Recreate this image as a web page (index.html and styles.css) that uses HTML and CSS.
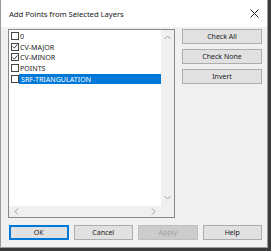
FILE: index.html
```html
<!DOCTYPE html>
<html>
<head>
<meta charset="utf-8">
<link rel="stylesheet" href="styles.css">
</head>
<body>
<div class="window">
  <div class="titlebar">
    <span class="title">Add Points from Selected Layers</span>
    <svg class="close" width="9" height="9" viewBox="0 0 9 9"><path d="M0.5 0.5 L8.5 8.5 M8.5 0.5 L0.5 8.5" stroke="#222" stroke-width="1" fill="none"/></svg>
  </div>
  <div class="body">
    <div class="main">
      <div class="listbox">
        <div class="listarea">
          <div class="items">
            <div class="row"><span class="cb"></span><span class="lbl">0</span></div>
            <div class="row"><span class="cb checked"><svg width="7" height="7" viewBox="0 0 7 7"><path d="M0.8 3.4 L2.7 5.4 L6.3 1" stroke="#222" stroke-width="1" fill="none"/></svg></span><span class="lbl">CV-MAJOR</span></div>
            <div class="row"><span class="cb checked"><svg width="7" height="7" viewBox="0 0 7 7"><path d="M0.8 3.4 L2.7 5.4 L6.3 1" stroke="#222" stroke-width="1" fill="none"/></svg></span><span class="lbl">CV-MINOR</span></div>
            <div class="row"><span class="cb"></span><span class="lbl">POINTS</span></div>
            <div class="row"><span class="cb"></span><span class="lbl sel">SRF-TRIANGULATION</span></div>
          </div>
          <div class="vscroll">
            <svg width="7" height="5" viewBox="0 0 7 5"><path d="M0.5 4 L3.5 1 L6.5 4" stroke="#a0a0a0" fill="none"/></svg>
            <svg width="7" height="5" viewBox="0 0 7 5"><path d="M0.5 1 L3.5 4 L6.5 1" stroke="#a0a0a0" fill="none"/></svg>
          </div>
        </div>
        <div class="hrow">
          <div class="hscroll">
            <svg width="5" height="7" viewBox="0 0 5 7"><path d="M4 0.5 L1 3.5 L4 6.5" stroke="#a0a0a0" fill="none"/></svg>
            <svg width="5" height="7" viewBox="0 0 5 7"><path d="M1 0.5 L4 3.5 L1 6.5" stroke="#a0a0a0" fill="none"/></svg>
          </div>
          <div class="corner"></div>
        </div>
      </div>
      <div class="side">
        <button class="btn">Check All</button>
        <button class="btn">Check None</button>
        <button class="btn">Invert</button>
      </div>
    </div>
    <div class="footer">
      <button class="btn ok">OK</button>
      <button class="btn">Cancel</button>
      <button class="btn disabled">Apply</button>
      <button class="btn">Help</button>
    </div>
  </div>
</div>
</body>
</html>
```
FILE: styles.css
```css
* { box-sizing: border-box; }
html, body { margin: 0; padding: 0; }
body {
  width: 271px;
  height: 251px;
  background: #3a3a3a;
  font-family: "Noto Sans", "Open Sans", sans-serif;
  overflow: hidden;
}
.window {
  width: 268px;
  height: 248px;
  background: #f0f0f0;
  border: 1px solid #9a9a9a;
  border-top: none;
  display: flex;
  flex-direction: column;
}
.titlebar {
  height: 27px;
  background: #fff;
  display: flex;
  align-items: center;
  justify-content: space-between;
  padding: 0 6px 0 8px;
}
.title {
  font-size: 7.7px;
  color: #222;
  letter-spacing: -0.05px;
}
.close { margin-right: 2px; }
.body {
  flex: 1;
  padding: 2px 5px 7px 7px;
  display: flex;
  flex-direction: column;
}
.main {
  display: flex;
  gap: 7px;
  height: 189px;
}
.listbox {
  width: 167px;
  height: 189px;
  border: 1px solid #828790;
  background: #fff;
  display: flex;
  flex-direction: column;
}
.listarea {
  flex: 1;
  display: flex;
}
.items {
  flex: 1;
  padding-top: 1px;
  font-size: 7.1px;
  color: #222;
}
.row {
  height: 10.6px;
  display: flex;
  align-items: center;
  padding-left: 2px;
}
.cb {
  width: 8px;
  height: 8px;
  border: 1px solid #444;
  background: #fff;
  display: flex;
  align-items: center;
  justify-content: center;
  flex: none;
}
.lbl {
  padding-left: 1px;
  line-height: 10px;
}
.lbl.sel {
  flex: 1;
  background: #0078d7;
  color: #fff;
  padding-left: 2px;
}
.vscroll {
  width: 13px;
  background: #f0f0f0;
  display: flex;
  flex-direction: column;
  justify-content: space-between;
  align-items: center;
  padding: 5px 0 6px;
}
.hrow {
  height: 11px;
  display: flex;
}
.hscroll {
  flex: 1;
  background: #f0f0f0;
  display: flex;
  justify-content: space-between;
  align-items: center;
  padding: 0 5px 0 5px;
}
.corner {
  width: 13px;
  background: #f0f0f0;
}
.side {
  width: 80px;
  display: flex;
  flex-direction: column;
  gap: 5px;
}
.btn {
  font-family: "Noto Sans", "Open Sans", sans-serif;
  font-size: 7px;
  color: #222;
  height: 15px;
  padding: 0;
  background: #e1e1e1;
  border: 1px solid #adadad;
  border-radius: 0;
  line-height: 13px;
}
.footer {
  margin-top: auto;
  display: flex;
  gap: 5px;
  padding-left: 1px;
}
.footer .btn { width: 60px; }
.btn.ok { border: 2px solid #0078d7; line-height: 11px; }
.btn.disabled { color: #a0a0a0; background: #cccccc; border-color: #bfbfbf; }
```
